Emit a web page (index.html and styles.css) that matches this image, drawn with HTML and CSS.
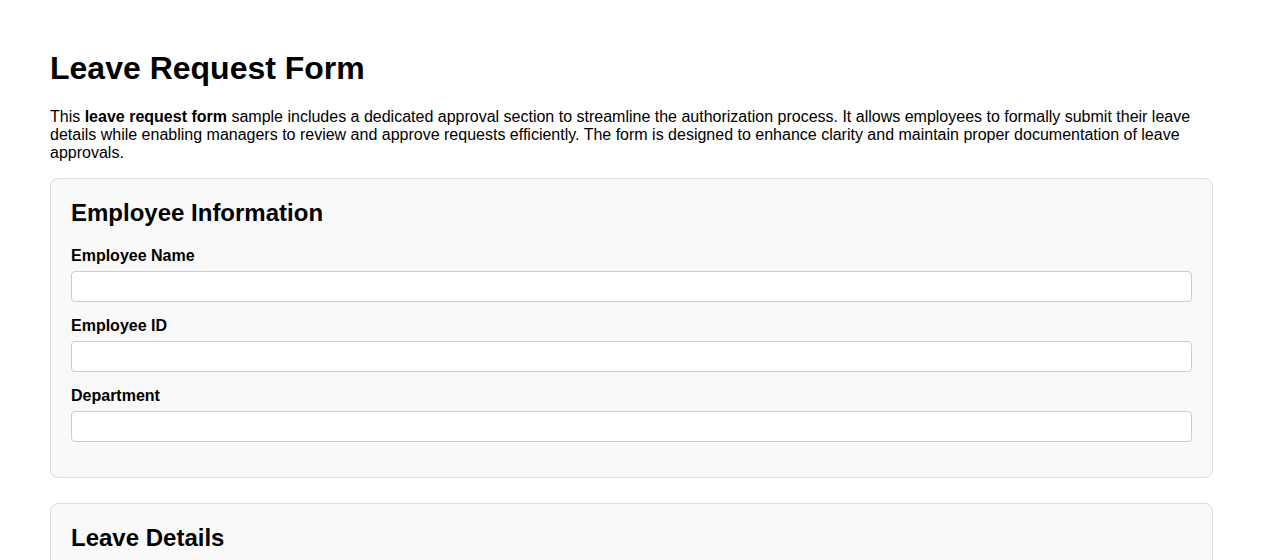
FILE: index.html
```html
<!DOCTYPE html>
<html lang="en">
  <head>
    <meta charset="UTF-8" />
    <meta name="viewport" content="width=device-width, initial-scale=1.0" />
    <title>Leave Request Form</title>
    <link rel="stylesheet" href="styles.css">
  </head>
  <body>
    <h1>Leave Request Form</h1>
    <p>
      This <strong>leave request form</strong> sample includes a dedicated approval section to streamline the authorization process. It allows employees to formally submit their leave details while enabling managers to review and approve requests efficiently. The form is designed to enhance clarity and maintain proper documentation of leave approvals.
    </p>

    <form>
      <div class="section">
        <h2>Employee Information</h2>
        <label for="name">Employee Name</label>
        <input type="text" id="name" />
        <label for="empid">Employee ID</label>
        <input type="text" id="empid" />
        <label for="dept">Department</label>
        <input type="text" id="dept" />
      </div>

      <div class="section">
        <h2>Leave Details</h2>
        <label for="type">Leave Type</label>
        <input type="text" id="type" />
        <label for="start">Start Date</label>
        <input type="date" id="start" />
        <label for="end">End Date</label>
        <input type="date" id="end" />
      </div>
    </form>
  </body>
</html>
```

FILE: styles.css
```css
body {
  font-family: Arial, "Liberation Sans", Helvetica, sans-serif;
  margin: 50px;
  color: #000;
  background: #fff;
}

h1 {
  font-size: 32px;
  margin: 0 0 21px;
}

p {
  font-size: 16px;
  margin: 0 0 16px;
}

.section {
  background: #f9f9f9;
  border: 1px solid #ddd;
  border-radius: 8px;
  padding: 20px;
  margin-bottom: 25px;
}

.section h2 {
  font-size: 24px;
  margin: 0 0 20px;
}

label {
  display: block;
  font-weight: bold;
  font-size: 16px;
  margin-bottom: 6px;
}

input {
  display: block;
  width: 100%;
  box-sizing: border-box;
  height: 31px;
  padding: 6px 8px;
  font-size: 14px;
  font-family: inherit;
  border: 1px solid #ccc;
  border-radius: 4px;
  background: #fff;
  margin-bottom: 15px;
}
```
